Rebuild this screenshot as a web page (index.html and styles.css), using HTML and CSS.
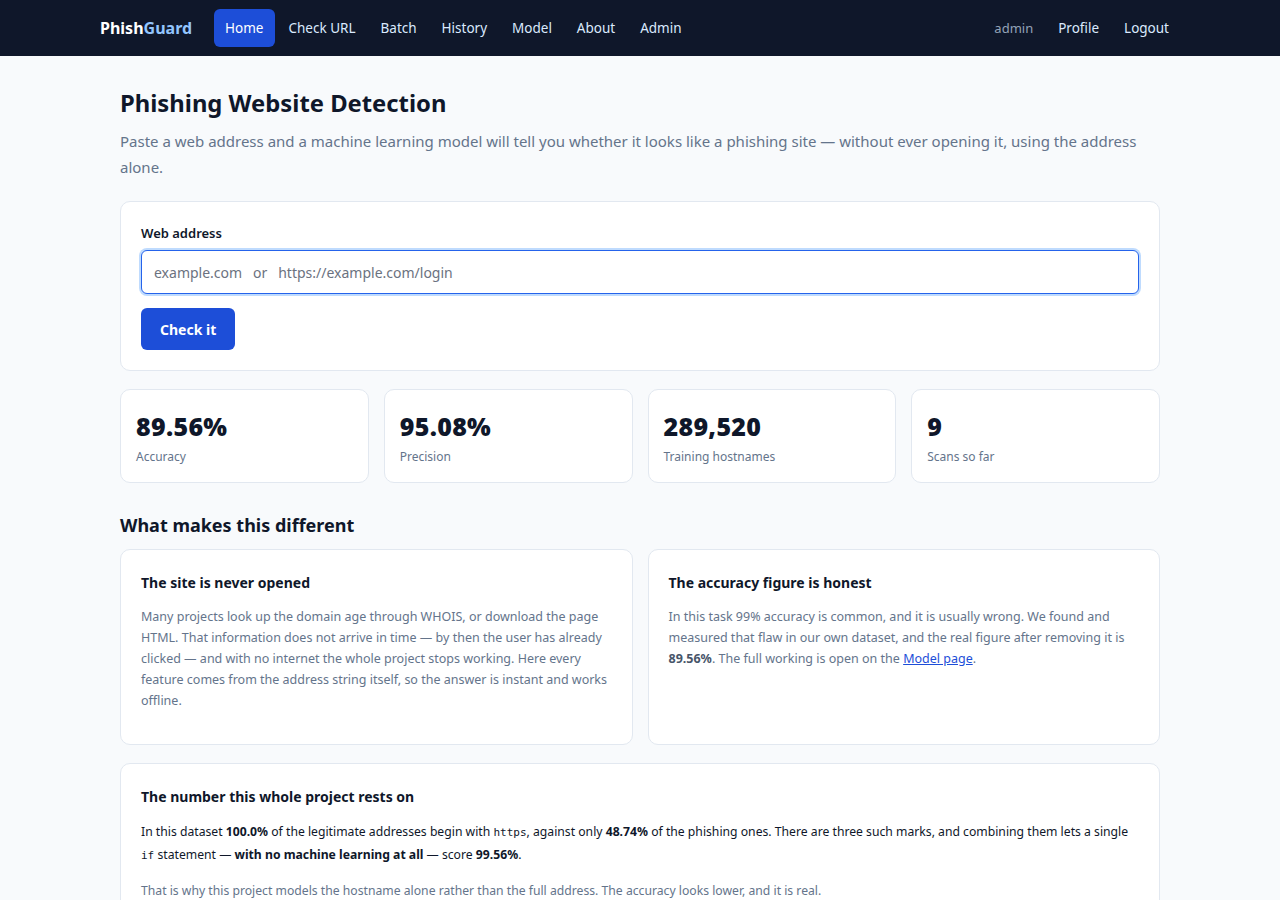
FILE: index.html
```html
<!DOCTYPE html>
<html lang="en">
<head>
  <meta charset="UTF-8">
  <title>PhishGuard</title>
  <meta name="viewport" content="width=device-width, initial-scale=1.0">
  <link rel="stylesheet" href="styles.css">
</head>
<body>

<nav class="topbar">
  <div class="topbar-inner">
    <a class="brand" href="#">Phish<span>Guard</span></a>
    <div class="nav-links">
      <a class="active" href="#">Home</a>
      <a href="#">Check URL</a>
      <a href="#">Batch</a>
      <a href="#">History</a>
      <a href="#">Model</a>
      <a href="#">About</a>
      <a href="#">Admin</a>
    </div>
    <div class="nav-user">
      <span class="who">admin</span>
      <a href="#">Profile</a>
      <a href="#">Logout</a>
    </div>
  </div>
</nav>

<main class="page">
  <h1>Phishing Website Detection</h1>
  <p class="lead">Paste a web address and a machine learning model will tell you whether it looks like a phishing site — without ever opening it, using the address alone.</p>

  <form class="card check-form">
    <label for="url">Web address</label>
    <input id="url" type="text" placeholder="example.com   or   https://example.com/login" autofocus>
    <button type="submit">Check it</button>
  </form>

  <div class="stats">
    <div class="stat">
      <div class="num">89.56%</div>
      <div class="lbl">Accuracy</div>
    </div>
    <div class="stat">
      <div class="num">95.08%</div>
      <div class="lbl">Precision</div>
    </div>
    <div class="stat">
      <div class="num">289,520</div>
      <div class="lbl">Training hostnames</div>
    </div>
    <div class="stat">
      <div class="num">9</div>
      <div class="lbl">Scans so far</div>
    </div>
  </div>

  <h2>What makes this different</h2>

  <div class="features">
    <div class="card feature">
      <h3>The site is never opened</h3>
      <p>Many projects look up the domain age through WHOIS, or download the page HTML. That information does not arrive in time — by then the user has already clicked — and with no internet the whole project stops working. Here every feature comes from the address string itself, so the answer is instant and works offline.</p>
    </div>
    <div class="card feature">
      <h3>The accuracy figure is honest</h3>
      <p>In this task 99% accuracy is common, and it is usually wrong. We found and measured that flaw in our own dataset, and the real figure after removing it is <strong>89.56%</strong>. The full working is open on the <a href="#">Model page</a>.</p>
    </div>
  </div>

  <div class="card key-number">
    <h3>The number this whole project rests on</h3>
    <p>In this dataset <strong>100.0%</strong> of the legitimate addresses begin with <code>https</code>, against only <strong>48.74%</strong> of the phishing ones. There are three such marks, and combining them lets a single <code>if</code> statement — <strong>with no machine learning at all</strong> — score <strong>99.56%</strong>.</p>
    <p class="muted">That is why this project models the hostname alone rather than the full address. The accuracy looks lower, and it is real.</p>
  </div>
</main>

</body>
</html>
```

FILE: styles.css
```css
html, body {
  margin: 0;
  padding: 0;
}

body {
  background-color: #f8fafc;
  color: #0f172a;
  font-family: "Noto Sans", "Open Sans", sans-serif;
}

a {
  text-decoration: none;
}

/* top navigation */
.topbar {
  background-color: #0f172a;
  height: 56px;
}

.topbar-inner {
  max-width: 1080px;
  margin: 0 auto;
  height: 100%;
  display: flex;
  align-items: center;
}

.brand {
  color: #ffffff;
  font-weight: 700;
  font-size: 16px;
  margin-right: 22px;
}

.brand span {
  color: #93c5fd;
}

.nav-links {
  display: flex;
  gap: 3px;
}

.nav-links a,
.nav-user a {
  color: #dbeafe;
  font-size: 13.5px;
  padding: 9px 11px;
  border-radius: 6px;
  line-height: 20px;
}

.nav-links a.active {
  background-color: #1d4ed8;
  color: #ffffff;
}

.nav-user {
  margin-left: auto;
  display: flex;
  align-items: center;
  gap: 3px;
}

.nav-user .who {
  color: #94a3b8;
  font-size: 13px;
  margin-right: 11px;
}

/* page */
.page {
  max-width: 1040px;
  margin: 0 auto;
  padding: 28px 0 40px;
}

h1 {
  font-size: 23.8px;
  font-weight: 700;
  margin: 0 0 6px;
  line-height: 38px;
}

.lead {
  color: #64748b;
  font-size: 15px;
  line-height: 26px;
  margin: 0 0 21px;
}

.card {
  background: #ffffff;
  border: 1px solid #e2e8f0;
  border-radius: 10px;
}

.check-form {
  display: flex;
  flex-direction: column;
  align-items: flex-start;
  padding: 20px 20px 20px;
}

.check-form label {
  font-size: 13px;
  font-weight: 600;
  margin: 2px 0 8px;
}

.check-form input {
  box-sizing: border-box;
  width: 100%;
  height: 44px;
  padding: 0 12px;
  font-family: inherit;
  font-size: 14px;
  color: #0f172a;
  border: 1px solid #2563eb;
  border-radius: 6px;
  box-shadow: 0 0 0 2px #bfdbfe;
  outline: none;
  margin-bottom: 14px;
}

.check-form input::placeholder {
  color: #6b7280;
  white-space: pre;
}

.check-form button {
  background-color: #1d4ed8;
  color: #ffffff;
  border: none;
  border-radius: 6px;
  font-family: inherit;
  font-weight: 700;
  font-size: 14px;
  height: 42px;
  padding: 0 19px;
  cursor: pointer;
}

/* stat tiles */
.stats {
  display: grid;
  grid-template-columns: repeat(4, 1fr);
  gap: 15px;
  margin: 18px 0 29px;
}

.stat {
  background: #ffffff;
  border: 1px solid #e2e8f0;
  border-radius: 10px;
  padding: 19px 15px 17px;
}

.stat .num {
  font-size: 25px;
  font-weight: 900;
  line-height: 34px;
  letter-spacing: 0.3px;
}

.stat .lbl {
  font-size: 12px;
  color: #64748b;
  margin-top: 5px;
}

h2 {
  font-size: 18px;
  font-weight: 700;
  margin: 0 0 11px;
  line-height: 26px;
}

.features {
  display: grid;
  grid-template-columns: 1fr 1fr;
  gap: 15px;
  margin-bottom: 18px;
}

.feature {
  padding: 22px 20px 33px;
}

.card h3 {
  font-size: 14px;
  font-weight: 700;
  margin: 0 0 12px;
  line-height: 22px;
}

.feature p {
  font-size: 12.5px;
  line-height: 21px;
  color: #64748b;
  margin: 1px 0 0;
}

.feature p strong {
  color: #475569;
}

.feature a {
  color: #1d4ed8;
  text-decoration: underline;
}

.key-number {
  padding: 22px 20px 20px;
}

.key-number p {
  font-size: 12.2px;
  line-height: 22px;
  margin: 0 0 13px;
}

.key-number h3 {
  margin-bottom: 13px;
}

.key-number p.muted {
  color: #64748b;
}

code {
  font-family: "DejaVu Sans Mono", "Liberation Mono", monospace;
  font-size: 11px;
}
```
